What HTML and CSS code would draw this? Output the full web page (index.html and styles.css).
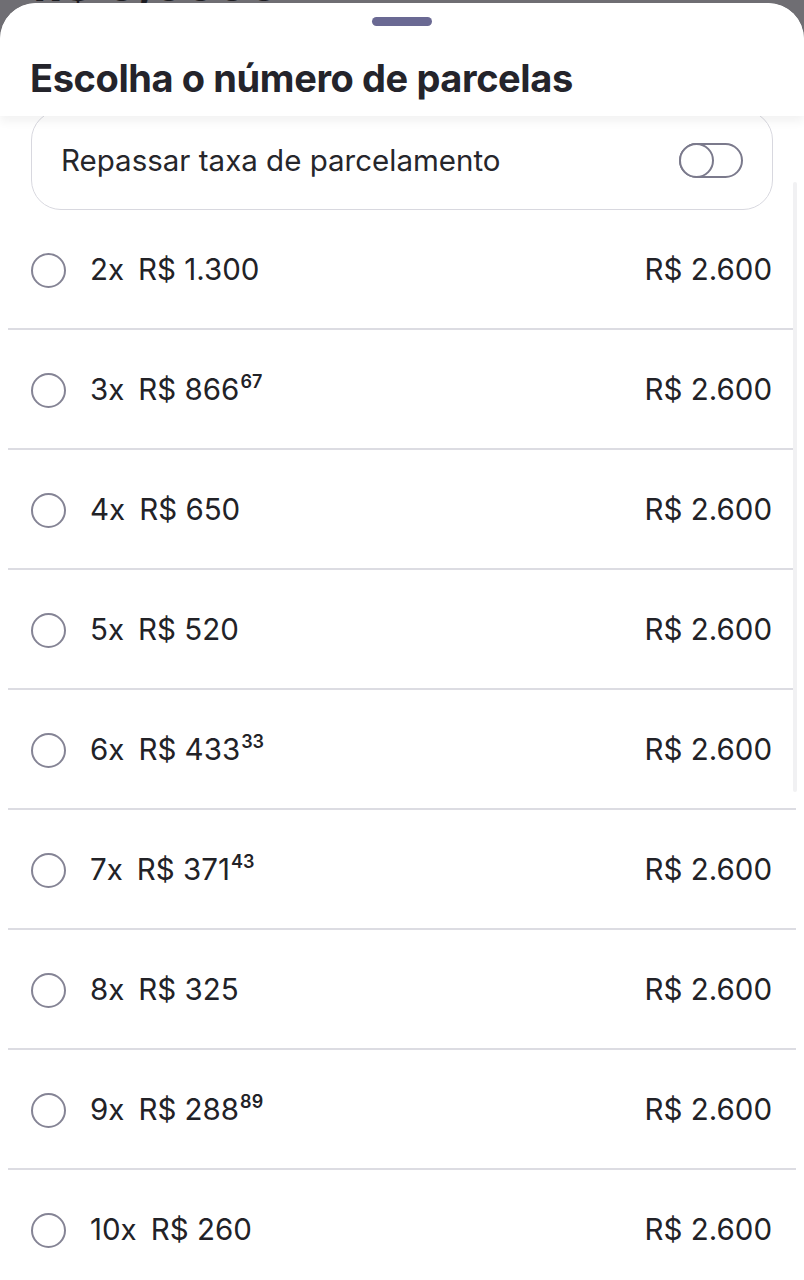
FILE: index.html
```html
<!DOCTYPE html>
<html lang="pt-br">
<head>
    <meta charset="UTF-8">
    <meta name="viewport" content="width=device-width, initial-scale=1.0">
    <link rel="stylesheet" href="styles.css">
    <title>Parcelas</title>
</head>
<body>
    <div class="backdrop">
        <span class="backdrop-text">R$ 0,0000</span>
    </div>
    <div class="sheet">
        <div class="sheet-header">
            <div class="handle"></div>
            <h1>Escolha o número de parcelas</h1>
        </div>
        <div class="sheet-body">
            <div class="scrollbar"></div>
            <div class="fee-card">
                <span>Repassar taxa de parcelamento</span>
                <div class="toggle"><div class="knob"></div></div>
            </div>
            <ul class="options">
                <li class="option">
                    <span class="radio"></span>
                    <span class="qty">2x</span>
                    <span class="value">R$ 1.300</span>
                    <span class="total">R$ 2.600</span>
                </li>
                <li class="option">
                    <span class="radio"></span>
                    <span class="qty">3x</span>
                    <span class="value">R$ 866<sup>67</sup></span>
                    <span class="total">R$ 2.600</span>
                </li>
                <li class="option">
                    <span class="radio"></span>
                    <span class="qty">4x</span>
                    <span class="value">R$ 650</span>
                    <span class="total">R$ 2.600</span>
                </li>
                <li class="option">
                    <span class="radio"></span>
                    <span class="qty">5x</span>
                    <span class="value">R$ 520</span>
                    <span class="total">R$ 2.600</span>
                </li>
                <li class="option">
                    <span class="radio"></span>
                    <span class="qty">6x</span>
                    <span class="value">R$ 433<sup>33</sup></span>
                    <span class="total">R$ 2.600</span>
                </li>
                <li class="option">
                    <span class="radio"></span>
                    <span class="qty">7x</span>
                    <span class="value">R$ 371<sup>43</sup></span>
                    <span class="total">R$ 2.600</span>
                </li>
                <li class="option">
                    <span class="radio"></span>
                    <span class="qty">8x</span>
                    <span class="value">R$ 325</span>
                    <span class="total">R$ 2.600</span>
                </li>
                <li class="option">
                    <span class="radio"></span>
                    <span class="qty">9x</span>
                    <span class="value">R$ 288<sup>89</sup></span>
                    <span class="total">R$ 2.600</span>
                </li>
                <li class="option">
                    <span class="radio"></span>
                    <span class="qty">10x</span>
                    <span class="value">R$ 260</span>
                    <span class="total">R$ 2.600</span>
                </li>
            </ul>
        </div>
    </div>
</body>
</html>
```

FILE: styles.css
```css
body {
    font-family: 'Inter', 'Liberation Sans', sans-serif;
    background-color: #6f6e73;
    color: #222227;
    margin: 0;
    height: 1280px;
    overflow: hidden;
}

.backdrop {
    height: 3px;
    overflow: hidden;
    padding-left: 34px;
}

.backdrop-text {
    display: block;
    margin-top: -30px;
    font-size: 40px;
    font-weight: 800;
    line-height: 34px;
    color: #1d1d22;
    letter-spacing: 4px;
}

.sheet {
    background-color: #fff;
    border-radius: 36px 36px 0 0;
    height: 1277px;
    overflow: hidden;
}

.sheet-header {
    position: relative;
    z-index: 2;
    background-color: #fff;
    height: 113px;
    box-shadow: 0 6px 10px rgba(0, 0, 0, 0.05);
    box-sizing: border-box;
    padding-top: 14px;
    border-radius: 36px 36px 0 0;
}

.handle {
    width: 60px;
    height: 9px;
    border-radius: 5px;
    background-color: #6a6993;
    margin: 0 auto;
}

h1 {
    margin: 30px 0 0 30px;
    font-size: 38px;
    font-weight: 700;
    letter-spacing: -0.4px;
    line-height: 44px;
    color: #24242b;
}

.sheet-body {
    position: relative;
}

.scrollbar {
    position: absolute;
    right: 7px;
    top: 72px;
    width: 4px;
    height: 610px;
    background-color: #f1f1f3;
    border-radius: 2px;
}

.fee-card {
    margin: -6px 31px 0 31px;
    height: 100px;
    box-sizing: border-box;
    border: 1px solid #d8d8df;
    border-radius: 30px;
    padding: 0 29px 0 29px;
    display: flex;
    align-items: center;
    justify-content: space-between;
    font-size: 29.5px;
    color: #26262b;
}

.toggle {
    width: 64px;
    height: 35px;
    box-sizing: border-box;
    border: 2px solid #7b7a8c;
    border-radius: 18px;
    position: relative;
}

.knob {
    position: absolute;
    left: -2px;
    top: -2px;
    width: 35px;
    height: 35px;
    box-sizing: border-box;
    border: 2px solid #7b7a8c;
    border-radius: 50%;
    background-color: #fff;
}

.options {
    list-style: none;
    margin: 0;
    padding: 0;
}

.option {
    height: 120px;
    box-sizing: border-box;
    margin: 0 8px;
    padding: 0 24px 0 23px;
    border-bottom: 2px solid #dcdce2;
    display: flex;
    align-items: center;
    font-size: 29.5px;
}

.radio {
    width: 35px;
    height: 35px;
    box-sizing: border-box;
    border: 2px solid #858495;
    border-radius: 50%;
    margin-right: 24px;
    margin-top: 2px;
}

.qty {
    margin-right: 14px;
}

.value sup {
    font-size: 18px;
    font-weight: 600;
    vertical-align: 12px;
    margin-left: 1px;
}

.total {
    margin-left: auto;
}
```
